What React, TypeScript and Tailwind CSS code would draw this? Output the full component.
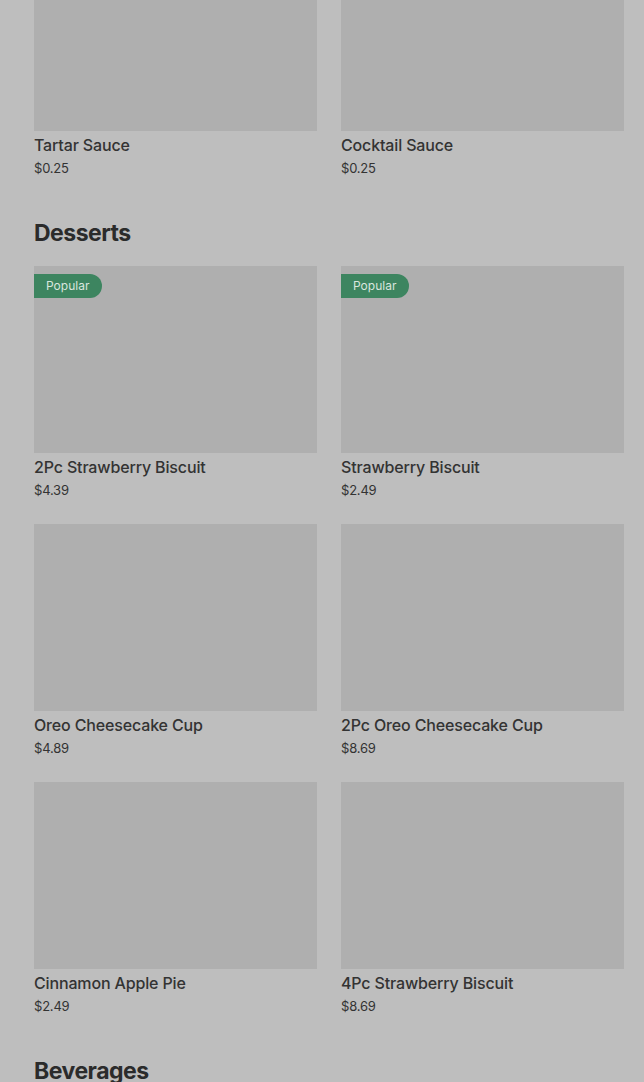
type Item = { name: string; price: string; popular?: boolean };

const sauces: Item[] = [
  { name: "Tartar Sauce", price: "$0.25" },
  { name: "Cocktail Sauce", price: "$0.25" },
];

const desserts: Item[] = [
  { name: "2Pc Strawberry Biscuit", price: "$4.39", popular: true },
  { name: "Strawberry Biscuit", price: "$2.49", popular: true },
  { name: "Oreo Cheesecake Cup", price: "$4.89" },
  { name: "2Pc Oreo Cheesecake Cup", price: "$8.69" },
  { name: "Cinnamon Apple Pie", price: "$2.49" },
  { name: "4Pc Strawberry Biscuit", price: "$8.69" },
];

const ItemCard = ({ item }: { item: Item }) => (
  <div className="flex flex-col">
    <div className="relative h-[187px] w-full bg-[#afafaf]">
      {item.popular && (
        <span className="absolute left-0 top-[8px] flex h-[24px] items-center rounded-r-full bg-[#3d8560] pl-[12px] pr-[13px] text-[12px] text-[#d9e6de]">
          Popular
        </span>
      )}
    </div>
    <p className="mt-[4px] text-[16px] leading-[20px] font-medium tracking-[-0.15px] text-[#333333]">
      {item.name}
    </p>
    <p className="mt-[4px] text-[13px] leading-[18px] text-[#333333] tracking-[-0.2px]">
      {item.price}
    </p>
  </div>
);

const Grid = ({ items }: { items: Item[] }) => (
  <div className="grid grid-cols-2 gap-x-[24px] gap-y-[25px]">
    {items.map((it) => (
      <ItemCard key={it.name} item={it} />
    ))}
  </div>
);

const Heading = ({ children }: { children: string }) => (
  <h2 className="mt-[42px] mb-[19px] text-[23px] leading-[28px] font-bold tracking-[-0.5px] text-[#2b2b2b]">
    {children}
  </h2>
);

export default function App() {
  return (
    <main
      className="h-[1082px] overflow-hidden bg-[#bebebe] pl-[34px] pr-[20px]"
      style={{ fontFamily: "Inter, 'Noto Sans', sans-serif" }}
    >
      <div className="-mt-[56px]">
        <Grid items={sauces} />
      </div>
      <Heading>Desserts</Heading>
      <Grid items={desserts} />
      <Heading>Beverages</Heading>
    </main>
  );
}
